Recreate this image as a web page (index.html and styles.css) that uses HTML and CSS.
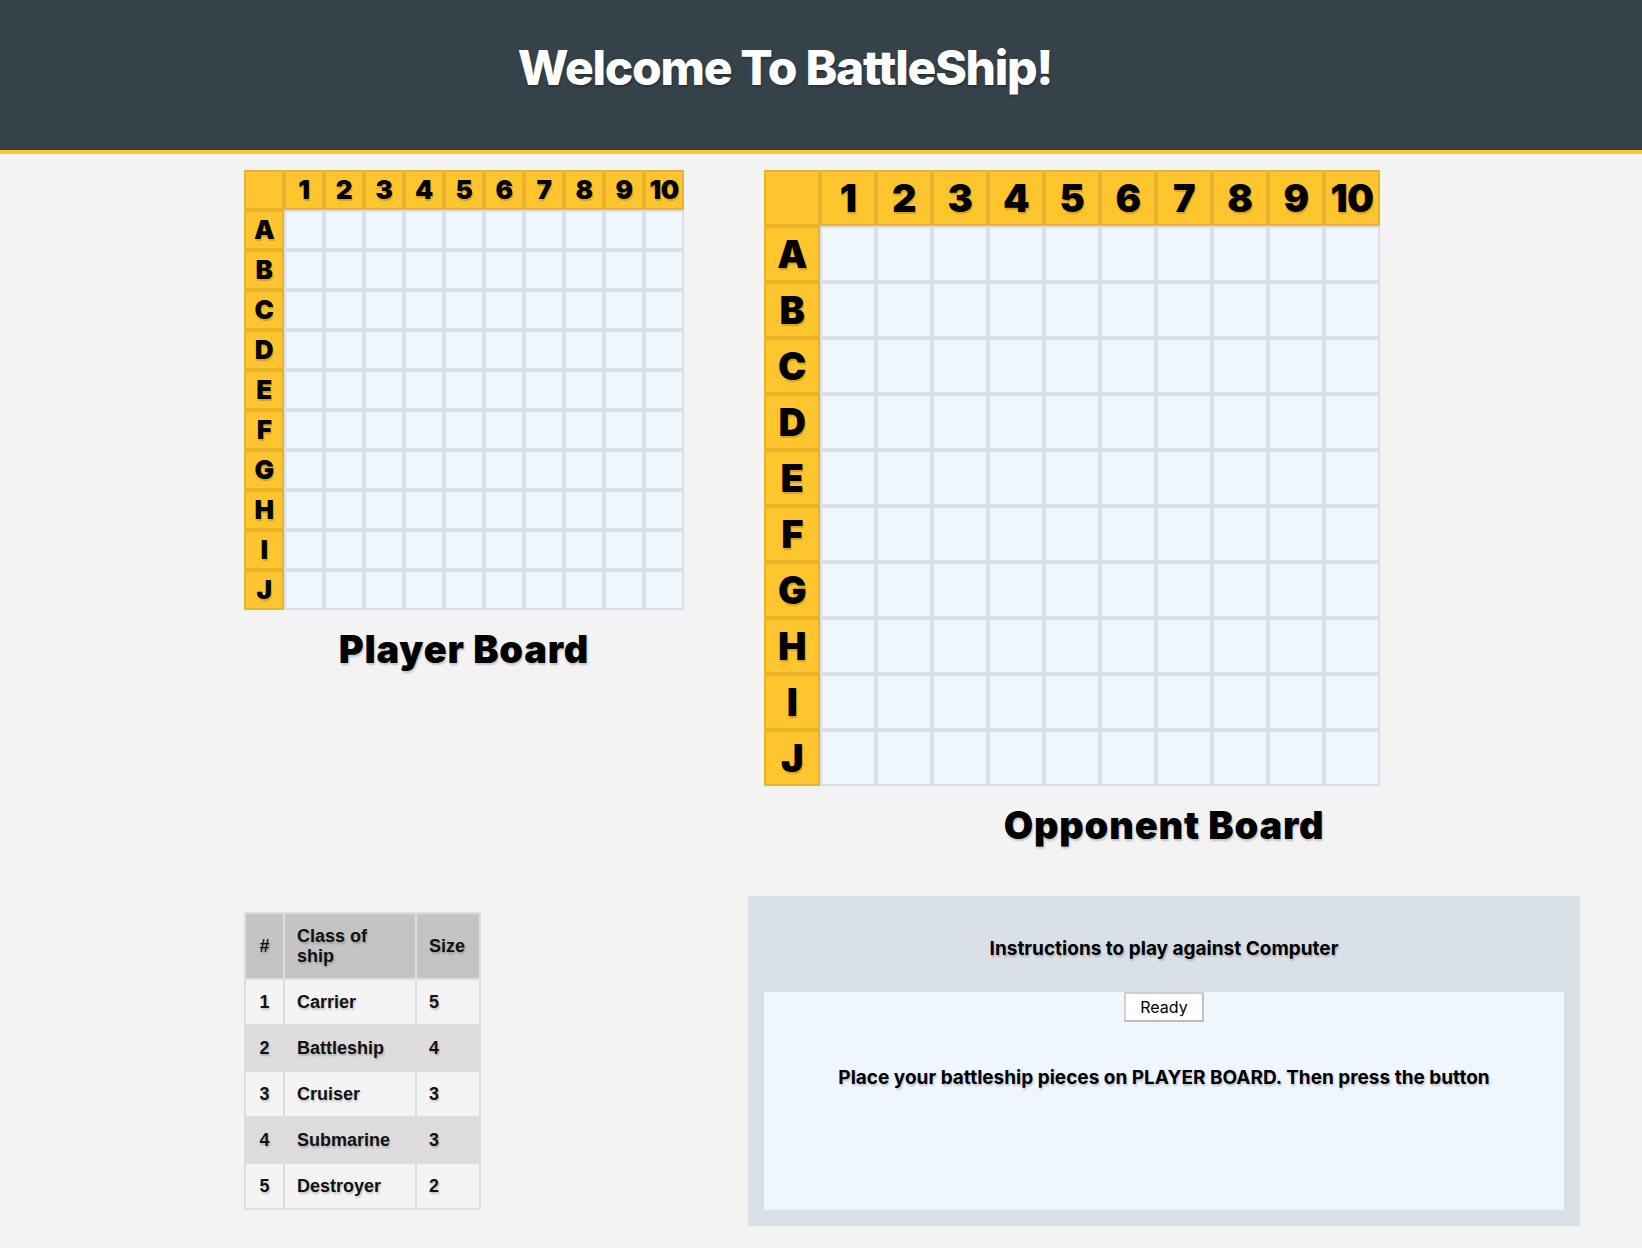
FILE: index.html
```html
<!DOCTYPE html>
<html lang="en">
<head>
<meta charset="utf-8">
<title>BattleShip</title>
<link rel="stylesheet" href="styles.css">
</head>
<body>
<header class="site-header">
  <h1 class="site-title">Welcome To BattleShip!</h1>
</header>
<main class="layout">
  <section class="col col-left">
    <div class="board board-small">
      <div class="cell label"></div><div class="cell label">1</div><div class="cell label">2</div><div class="cell label">3</div><div class="cell label">4</div><div class="cell label">5</div><div class="cell label">6</div><div class="cell label">7</div><div class="cell label">8</div><div class="cell label">9</div><div class="cell label">10</div>
      <div class="cell label">A</div><div class="cell"></div><div class="cell"></div><div class="cell"></div><div class="cell"></div><div class="cell"></div><div class="cell"></div><div class="cell"></div><div class="cell"></div><div class="cell"></div><div class="cell"></div>
      <div class="cell label">B</div><div class="cell"></div><div class="cell"></div><div class="cell"></div><div class="cell"></div><div class="cell"></div><div class="cell"></div><div class="cell"></div><div class="cell"></div><div class="cell"></div><div class="cell"></div>
      <div class="cell label">C</div><div class="cell"></div><div class="cell"></div><div class="cell"></div><div class="cell"></div><div class="cell"></div><div class="cell"></div><div class="cell"></div><div class="cell"></div><div class="cell"></div><div class="cell"></div>
      <div class="cell label">D</div><div class="cell"></div><div class="cell"></div><div class="cell"></div><div class="cell"></div><div class="cell"></div><div class="cell"></div><div class="cell"></div><div class="cell"></div><div class="cell"></div><div class="cell"></div>
      <div class="cell label">E</div><div class="cell"></div><div class="cell"></div><div class="cell"></div><div class="cell"></div><div class="cell"></div><div class="cell"></div><div class="cell"></div><div class="cell"></div><div class="cell"></div><div class="cell"></div>
      <div class="cell label">F</div><div class="cell"></div><div class="cell"></div><div class="cell"></div><div class="cell"></div><div class="cell"></div><div class="cell"></div><div class="cell"></div><div class="cell"></div><div class="cell"></div><div class="cell"></div>
      <div class="cell label">G</div><div class="cell"></div><div class="cell"></div><div class="cell"></div><div class="cell"></div><div class="cell"></div><div class="cell"></div><div class="cell"></div><div class="cell"></div><div class="cell"></div><div class="cell"></div>
      <div class="cell label">H</div><div class="cell"></div><div class="cell"></div><div class="cell"></div><div class="cell"></div><div class="cell"></div><div class="cell"></div><div class="cell"></div><div class="cell"></div><div class="cell"></div><div class="cell"></div>
      <div class="cell label">I</div><div class="cell"></div><div class="cell"></div><div class="cell"></div><div class="cell"></div><div class="cell"></div><div class="cell"></div><div class="cell"></div><div class="cell"></div><div class="cell"></div><div class="cell"></div>
      <div class="cell label">J</div><div class="cell"></div><div class="cell"></div><div class="cell"></div><div class="cell"></div><div class="cell"></div><div class="cell"></div><div class="cell"></div><div class="cell"></div><div class="cell"></div><div class="cell"></div>
    </div>
    <h2 class="board-title">Player Board</h2>
  </section>
  <section class="col col-right">
    <div class="board board-large">
      <div class="cell label"></div><div class="cell label">1</div><div class="cell label">2</div><div class="cell label">3</div><div class="cell label">4</div><div class="cell label">5</div><div class="cell label">6</div><div class="cell label">7</div><div class="cell label">8</div><div class="cell label">9</div><div class="cell label">10</div>
      <div class="cell label">A</div><div class="cell"></div><div class="cell"></div><div class="cell"></div><div class="cell"></div><div class="cell"></div><div class="cell"></div><div class="cell"></div><div class="cell"></div><div class="cell"></div><div class="cell"></div>
      <div class="cell label">B</div><div class="cell"></div><div class="cell"></div><div class="cell"></div><div class="cell"></div><div class="cell"></div><div class="cell"></div><div class="cell"></div><div class="cell"></div><div class="cell"></div><div class="cell"></div>
      <div class="cell label">C</div><div class="cell"></div><div class="cell"></div><div class="cell"></div><div class="cell"></div><div class="cell"></div><div class="cell"></div><div class="cell"></div><div class="cell"></div><div class="cell"></div><div class="cell"></div>
      <div class="cell label">D</div><div class="cell"></div><div class="cell"></div><div class="cell"></div><div class="cell"></div><div class="cell"></div><div class="cell"></div><div class="cell"></div><div class="cell"></div><div class="cell"></div><div class="cell"></div>
      <div class="cell label">E</div><div class="cell"></div><div class="cell"></div><div class="cell"></div><div class="cell"></div><div class="cell"></div><div class="cell"></div><div class="cell"></div><div class="cell"></div><div class="cell"></div><div class="cell"></div>
      <div class="cell label">F</div><div class="cell"></div><div class="cell"></div><div class="cell"></div><div class="cell"></div><div class="cell"></div><div class="cell"></div><div class="cell"></div><div class="cell"></div><div class="cell"></div><div class="cell"></div>
      <div class="cell label">G</div><div class="cell"></div><div class="cell"></div><div class="cell"></div><div class="cell"></div><div class="cell"></div><div class="cell"></div><div class="cell"></div><div class="cell"></div><div class="cell"></div><div class="cell"></div>
      <div class="cell label">H</div><div class="cell"></div><div class="cell"></div><div class="cell"></div><div class="cell"></div><div class="cell"></div><div class="cell"></div><div class="cell"></div><div class="cell"></div><div class="cell"></div><div class="cell"></div>
      <div class="cell label">I</div><div class="cell"></div><div class="cell"></div><div class="cell"></div><div class="cell"></div><div class="cell"></div><div class="cell"></div><div class="cell"></div><div class="cell"></div><div class="cell"></div><div class="cell"></div>
      <div class="cell label">J</div><div class="cell"></div><div class="cell"></div><div class="cell"></div><div class="cell"></div><div class="cell"></div><div class="cell"></div><div class="cell"></div><div class="cell"></div><div class="cell"></div><div class="cell"></div>
    </div>
    <h2 class="board-title">Opponent Board</h2>
  </section>
  <section class="col col-left">
    <table class="ships">
      <colgroup><col class="c-num"><col class="c-class"><col class="c-size"></colgroup>
      <thead>
        <tr><th class="num">#</th><th>Class of<br>ship</th><th>Size</th></tr>
      </thead>
      <tbody>
        <tr><td class="num">1</td><td>Carrier</td><td>5</td></tr>
        <tr><td class="num">2</td><td>Battleship</td><td>4</td></tr>
        <tr><td class="num">3</td><td>Cruiser</td><td>3</td></tr>
        <tr><td class="num">4</td><td>Submarine</td><td>3</td></tr>
        <tr><td class="num">5</td><td>Destroyer</td><td>2</td></tr>
      </tbody>
    </table>
  </section>
  <section class="col col-right">
    <div class="instructions">
      <h3 class="instructions-title">Instructions to play against Computer</h3>
      <div class="instructions-panel">
        <button class="ready-btn" type="button">Ready</button>
        <p class="instructions-text">Place your battleship pieces on PLAYER BOARD. Then press the button</p>
      </div>
    </div>
  </section>
</main>
</body>
</html>
```

FILE: styles.css
```css
* { box-sizing: border-box; }

body {
  margin: 0;
  background: #f3f3f3;
  font-family: Inter, "Noto Sans", sans-serif;
  color: #000;
}

.site-header {
  height: 154px;
  background: #36424a;
  border-bottom: 4px solid #ffc42e;
  display: flex;
  align-items: center;
  justify-content: center;
  padding: 0 72px 15px 0;
}

.site-title {
  margin: 0;
  color: #fff;
  font-size: 48px;
  font-weight: 800;
  letter-spacing: -1.3px;
  text-shadow: 1px 2px 2px rgba(0, 0, 0, 0.25);
}

.layout {
  display: grid;
  grid-template-columns: 440px 832px;
  column-gap: 64px;
  padding: 16px 0 0 244px;
}

.col { display: flex; flex-direction: column; }
.col-left { align-items: flex-start; }

.board {
  display: grid;
}
.board-small {
  grid-template-columns: repeat(11, 40px);
  grid-auto-rows: 40px;
  font-size: 26px;
}
.board-large {
  grid-template-columns: repeat(11, 56px);
  grid-auto-rows: 56px;
  font-size: 38px;
  margin-left: 16px;
}

.cell {
  border: 2px solid #dae0e8;
  background: #eff6fe;
}

.cell.label {
  background: #ffc52f;
  border-color: #e9b42c;
  display: flex;
  align-items: center;
  justify-content: center;
  font-weight: 900;
  color: #000;
  line-height: 1;
  letter-spacing: -0.5px;
  text-shadow: 1px 2px 1px rgba(120, 80, 0, 0.3);
}

.board-title {
  align-self: stretch;
  margin: 16px 0 48px;
  text-align: center;
  font-size: 38px;
  font-weight: 900;
  letter-spacing: 0.8px;
  text-shadow: 1px 2px 2px rgba(0, 0, 0, 0.2);
}

.ships {
  margin-top: 16px;
  width: 235px;
  table-layout: fixed;
  border-collapse: collapse;
  border: 2px solid #dddddd;
  font-family: "Liberation Sans", Arial, sans-serif;
  font-weight: 700;
  font-size: 18px;
  line-height: 20px;
  color: #111;
  text-shadow: 1px 2px 2px rgba(0, 0, 0, 0.2);
}
.c-num { width: 39px; }
.c-class { width: 132px; }
.c-size { width: 64px; }

.ships th,
.ships td {
  border: 2px solid #dddddd;
  padding: 12px 12px;
  text-align: left;
  font-weight: 700;
}
.ships th { background: #c4c4c4; padding: 12px 12px 12px; }
.ships .num { text-align: center; padding-left: 4px; padding-right: 4px; }
.ships tbody tr:nth-child(odd) td { background: #f4f4f4; }
.ships tbody tr:nth-child(even) td { background: #dddddd; }

.instructions {
  background: #dae0e7;
  padding: 0 16px 16px;
}

.instructions-title {
  margin: 0;
  height: 96px;
  padding-top: 8px;
  display: flex;
  align-items: center;
  justify-content: center;
  font-size: 19px;
  font-weight: 700;
  text-shadow: 1px 2px 2px rgba(0, 0, 0, 0.2);
}

.instructions-panel {
  background: #eff6fe;
  height: 218px;
  display: flex;
  flex-direction: column;
  align-items: center;
}

.ready-btn {
  height: 30px;
  padding: 0 14px;
  background: #fff;
  border: 2px solid #d0d0d0;
  border-bottom-color: #bcbcbc;
  border-right-color: #c4c4c4;
  font-family: Inter, "Noto Sans", sans-serif;
  font-size: 16px;
  color: #000;
}

.instructions-text {
  margin: 44px 0 0;
  font-size: 19px;
  font-weight: 700;
  text-shadow: 1px 2px 2px rgba(0, 0, 0, 0.2);
}
```
